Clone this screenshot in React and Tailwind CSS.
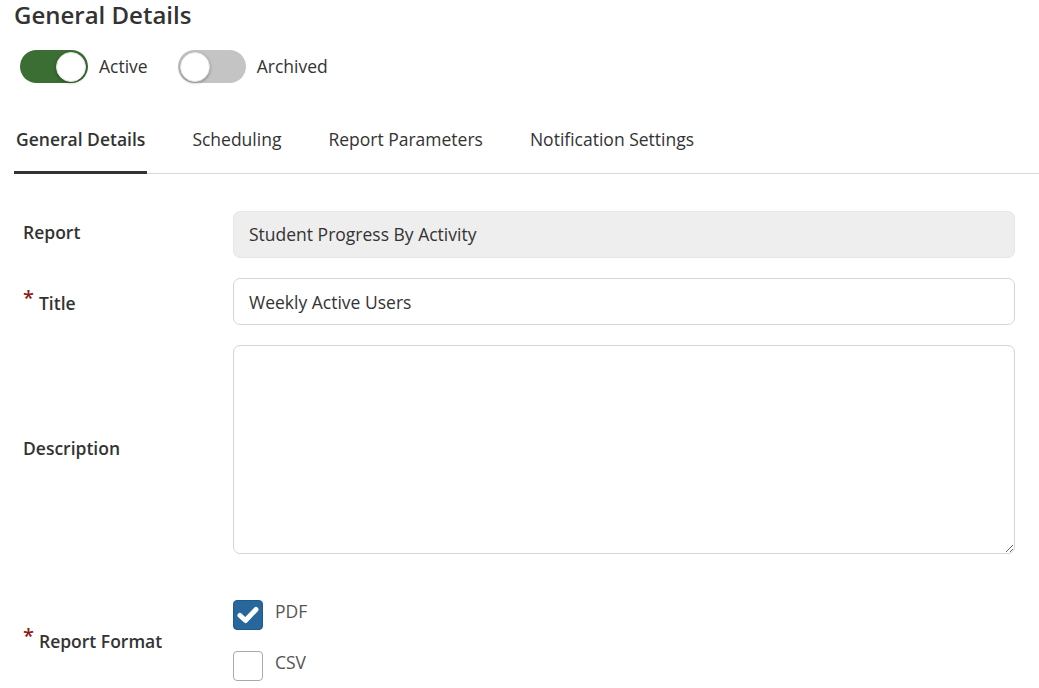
import React, { useState } from "react";

const font = { fontFamily: '"Open Sans", "Liberation Sans", sans-serif' };

function Toggle({ on, label, onChange }) {
  return (
    <button type="button" onClick={onChange} className="flex items-center gap-[11px]">
      <span
        className={
          "flex items-center w-[68px] h-[33px] rounded-full px-[2px] " +
          (on ? "bg-[#3b6e32] justify-end" : "bg-[#c4c4c4] justify-start")
        }
      >
        <span className="w-[30px] h-[30px] rounded-full bg-white border border-[#e2e2e2] shadow-[0_1px_3px_rgba(0,0,0,0.35)]" />
      </span>
      <span className="text-[17.5px] text-[#333]">{label}</span>
    </button>
  );
}

function Checkbox({ checked, label, onChange }) {
  return (
    <label className="flex items-start gap-[12px] cursor-pointer" onClick={onChange}>
      <span
        className={
          "w-[30px] h-[30px] rounded-[4px] flex items-center justify-center " +
          (checked ? "bg-[#27679b] border border-[#1f5a8a]" : "bg-white border border-[#aaa]")
        }
      >
        {checked && (
          <svg width="22" height="18" viewBox="0 0 22 18">
            <path d="M3 9.5 L8.5 14.5 L19 3.5" fill="none" stroke="white" strokeWidth="5" strokeLinecap="round" strokeLinejoin="round" />
          </svg>
        )}
      </span>
      <span className="-mt-[1px] text-[17.5px] text-[#555] leading-[24px]">{label}</span>
    </label>
  );
}

function Label({ required, className = "", children }) {
  return (
    <div className={"w-[210px] pl-[23px] text-[17.5px] font-semibold text-[#333] flex items-start " + className}>
      {required && <span className="text-[#8b1a1a] text-[20px] leading-[20px] mr-[5px] -mt-[2px]">*</span>}
      <span>{children}</span>
    </div>
  );
}

export default function App() {
  const [active, setActive] = useState(true);
  const [archived, setArchived] = useState(false);
  const [pdf, setPdf] = useState(true);
  const [csv, setCsv] = useState(false);
  const tabs = ["General Details", "Scheduling", "Report Parameters", "Notification Settings"];
  const [tab, setTab] = useState(0);

  return (
    <div className="bg-white w-[1039px] h-[688px] overflow-hidden text-[#333]" style={font}>
      <h1 className="pl-[14px] pt-[1px] text-[24px] font-semibold leading-[28px] text-[#333]">General Details</h1>

      <div className="flex items-center gap-[30px] pl-[20px] mt-[21px]">
        <Toggle on={active} label="Active" onChange={() => setActive(!active)} />
        <Toggle on={archived} label="Archived" onChange={() => setArchived(!archived)} />
      </div>

      {/* Tabs */}
      <div className="ml-[14px] mt-[28px] flex border-b border-[#d8d8d8] gap-[43px]">
        {tabs.map((t, i) => (
          <button
            key={t}
            type="button"
            onClick={() => setTab(i)}
            className={
              "px-[2px] pt-[16px] pb-[20px] text-[17.5px] leading-[24px] -mb-[1px] border-b-[3px] " +
              (tab === i ? "border-[#333] font-semibold text-[#333]" : "border-transparent text-[#333]")
            }
          >
            {t}
          </button>
        ))}
      </div>

      {/* Form */}
      <div className="mt-[37px] flex flex-col">
        <div className="flex items-center">
          <Label className="-mt-[4px]">Report</Label>
          <div className="ml-[23px] w-[782px] h-[47px] rounded-[7px] bg-[#eeeeee] border border-[#e6e6e6] flex items-center px-[15px] text-[17.5px] text-[#333]">
            Student Progress By Activity
          </div>
        </div>

        <div className="flex items-center mt-[20px]">
          <Label required className="mt-[3px]">Title</Label>
          <input
            defaultValue="Weekly Active Users"
            className="ml-[23px] w-[782px] h-[47px] rounded-[7px] bg-white border border-[#d4d4dc] px-[15px] text-[17.5px] text-[#333] outline-none"
          />
        </div>

        <div className="flex items-center mt-[20px]">
          <Label className="-mt-[2px]">Description</Label>
          <textarea className="ml-[23px] w-[782px] h-[209px] rounded-[7px] bg-white border border-[#d4d4dc] px-[15px] py-[10px] text-[17.5px] outline-none" />
        </div>

        <div className="flex items-center mt-[46px]">
          <Label required className="mt-[2px]">Report Format</Label>
          <div className="ml-[23px] flex flex-col gap-[21px]">
            <Checkbox checked={pdf} label="PDF" onChange={() => setPdf(!pdf)} />
            <Checkbox checked={csv} label="CSV" onChange={() => setCsv(!csv)} />
          </div>
        </div>
      </div>
    </div>
  );
}
